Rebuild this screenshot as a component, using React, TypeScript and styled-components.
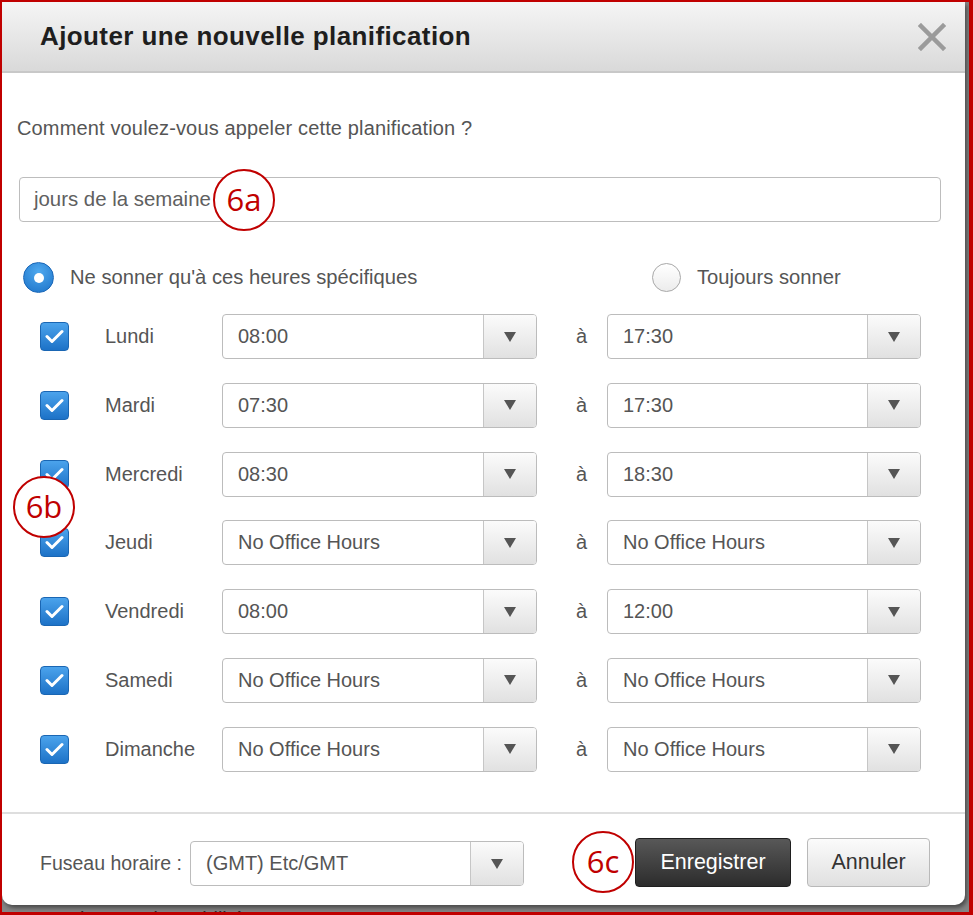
import React from 'react'
import styled, { createGlobalStyle } from 'styled-components'

const GlobalStyle = createGlobalStyle`
    html, body {
        margin: 0;
        padding: 0;
        background: #8a8a8a;
    }
    body {
        font-family: "Liberation Sans", Arial, sans-serif;
    }
`

interface DayRow {
    day: string
    from: string
    to: string
}

const days: DayRow[] = [
    { day: 'Lundi', from: '08:00', to: '17:30' },
    { day: 'Mardi', from: '07:30', to: '17:30' },
    { day: 'Mercredi', from: '08:30', to: '18:30' },
    { day: 'Jeudi', from: 'No Office Hours', to: 'No Office Hours' },
    { day: 'Vendredi', from: '08:00', to: '12:00' },
    { day: 'Samedi', from: 'No Office Hours', to: 'No Office Hours' },
    { day: 'Dimanche', from: 'No Office Hours', to: 'No Office Hours' },
]

const Select: React.FC<{ value: string; width: number }> = ({ value, width }) => (
    <SelectBox $width={width}>
        <SelectValue>{value}</SelectValue>
        <SelectArrow>
            <svg width="14" height="12" viewBox="0 0 14 12">
                <path d="M1 1 L13 1 L7 11 Z" fill="#555" />
            </svg>
        </SelectArrow>
    </SelectBox>
)

const Checkbox: React.FC = () => (
    <CheckBox>
        <svg width="19" height="15" viewBox="0 0 19 15">
            <path d="M2 7.5 L7 12.5 L17 2.5" stroke="#fff" strokeWidth="3" fill="none" strokeLinecap="round" strokeLinejoin="round" />
        </svg>
    </CheckBox>
)

const App: React.FC = () => {
    return (
        <>
            <GlobalStyle />
            <Frame>
                <Dialog>
                    <Header>
                        <Title>Ajouter une nouvelle planification</Title>
                        <CloseButton>
                            <svg width="28" height="28" viewBox="0 0 28 28">
                                <path d="M3 3 L25 25 M25 3 L3 25" stroke="#9b9b9b" strokeWidth="4.5" strokeLinecap="square" />
                            </svg>
                        </CloseButton>
                    </Header>
                    <Body>
                        <Question>Comment voulez-vous appeler cette planification ?</Question>
                        <NameInput>jours de la semaine</NameInput>
                        <RadioRow>
                            <RadioOption>
                                <Radio $checked />
                                <RadioLabel>Ne sonner qu'à ces heures spécifiques</RadioLabel>
                            </RadioOption>
                            <RadioOption>
                                <Radio />
                                <RadioLabel>Toujours sonner</RadioLabel>
                            </RadioOption>
                        </RadioRow>
                        <Rows>
                            {days.map((d) => (
                                <Row key={d.day}>
                                    <Checkbox />
                                    <DayLabel>{d.day}</DayLabel>
                                    <Select value={d.from} width={315} />
                                    <ToLabel>à</ToLabel>
                                    <Select value={d.to} width={314} />
                                </Row>
                            ))}
                        </Rows>
                    </Body>
                    <Footer>
                        <FooterLeft>
                            <TzLabel>Fuseau horaire :</TzLabel>
                            <Select value="(GMT) Etc/GMT" width={334} />
                        </FooterLeft>
                        <FooterButtons>
                            <Button $primary $width={156}>Enregistrer</Button>
                            <Button $width={123}>Annuler</Button>
                        </FooterButtons>
                    </Footer>
                </Dialog>
                <BehindText>bouton de mobilité</BehindText>
                <Marker $x={213} $y={169}>6a</Marker>
                <Marker $x={13} $y={476}>6b</Marker>
                <Marker $x={572} $y={831}>6c</Marker>
            </Frame>
        </>
    )
}

const Frame = styled.div`
    position: relative;
    width: 973px;
    height: 915px;
    box-sizing: border-box;
    border-style: solid;
    border-color: #c00000;
    border-width: 2px 4px 3px 2px;
    background: #858585;
    overflow: hidden;
    display: flex;
    flex-direction: column;
`
const Dialog = styled.div`
    width: 963px;
    height: 903px;
    flex-shrink: 0;
    background: #fff;
    border-radius: 0 0 10px 10px;
    box-shadow: 2px 3px 4px rgba(0, 0, 0, 0.45);
    display: flex;
    flex-direction: column;
    position: relative;
    z-index: 1;
`
const Header = styled.div`
    height: 69px;
    flex-shrink: 0;
    background: linear-gradient(to bottom, #f5f5f5, #d9d9d9);
    border-bottom: 2px solid #c8c8c8;
    display: flex;
    align-items: center;
    justify-content: space-between;
    padding: 0 19px 0 38px;
`
const Title = styled.h1`
    margin: 0;
    font-size: 26px;
    font-weight: bold;
    color: #1e1e1e;
    letter-spacing: 0.4px;
`
const CloseButton = styled.div`
    width: 28px;
    height: 28px;
    display: flex;
`
const Body = styled.div`
    flex: 1;
    padding: 0 24px 0 15px;
    display: flex;
    flex-direction: column;
`
const Question = styled.div`
    margin-top: 43px;
    font-size: 20px;
    line-height: 24px;
    color: #555;
    letter-spacing: 0.15px;
`
const NameInput = styled.div`
    margin-top: 37px;
    margin-left: 2px;
    width: 922px;
    height: 45px;
    box-sizing: border-box;
    border: 1px solid #bdbdbd;
    border-radius: 4px;
    padding-left: 14px;
    display: flex;
    align-items: center;
    font-size: 20.4px;
    color: #606060;
`
const RadioRow = styled.div`
    margin-top: 40px;
    display: grid;
    grid-template-columns: 635px 1fr;
    height: 31px;
    align-items: center;
`
const RadioOption = styled.div`
    display: flex;
    align-items: center;
    gap: 16px;
`
const Radio = styled.div<{ $checked?: boolean }>`
    box-sizing: border-box;
    width: ${(p) => (p.$checked ? '31px' : '29px')};
    height: ${(p) => (p.$checked ? '31px' : '29px')};
    margin-left: ${(p) => (p.$checked ? '6px' : '0')};
    border-radius: 50%;
    position: relative;
    background: ${(p) =>
        p.$checked
            ? 'radial-gradient(circle at 50% 30%, #4fa9ef, #1b72c8)'
            : 'linear-gradient(to bottom, #fff, #ececec)'};
    border: 1px solid ${(p) => (p.$checked ? '#1a67b8' : '#a8a8a8')};
    &::after {
        content: '';
        display: ${(p) => (p.$checked ? 'block' : 'none')};
        position: absolute;
        width: 10px;
        height: 10px;
        border-radius: 50%;
        background: #fff;
        top: 50%;
        left: 50%;
        transform: translate(-50%, -50%);
    }
`
const RadioLabel = styled.span`
    font-size: 20.2px;
    color: #555;
`
const Rows = styled.div`
    margin-top: 21px;
    display: flex;
    flex-direction: column;
    gap: 23.8px;
`
const Row = styled.div`
    display: grid;
    grid-template-columns: 65px 117px 315px 70px 314px;
    align-items: center;
    height: 45px;
    padding-left: 23px;
`
const CheckBox = styled.div`
    width: 29px;
    height: 29px;
    box-sizing: border-box;
    border-radius: 4px;
    border: 1px solid #1a66b3;
    background: linear-gradient(to bottom, #4ba3ec, #1d72c7);
    display: flex;
    align-items: center;
    justify-content: center;
`
const DayLabel = styled.span`
    font-size: 20px;
    color: #555;
`
const ToLabel = styled.span`
    font-size: 20px;
    color: #555;
    padding-left: 39px;
`
const SelectBox = styled.div<{ $width: number }>`
    width: ${(p) => p.$width}px;
    height: 45px;
    box-sizing: border-box;
    border: 1px solid #bcbcbc;
    border-radius: 4px;
    display: flex;
    overflow: hidden;
    background: #fff;
`
const SelectValue = styled.div`
    flex: 1;
    display: flex;
    align-items: center;
    padding-left: 15px;
    font-size: 20px;
    color: #555;
`
const SelectArrow = styled.div`
    width: 52px;
    border-left: 1px solid #c6c6c6;
    background: linear-gradient(to bottom, #fbfbfb, #e1e1e1);
    display: flex;
    align-items: center;
    justify-content: center;
`
const Footer = styled.div`
    height: 93px;
    flex-shrink: 0;
    border-top: 2px solid #dedede;
    display: flex;
    align-items: center;
    justify-content: space-between;
    padding: 8px 35px 0 38px;
    box-sizing: border-box;
`
const FooterLeft = styled.div`
    display: flex;
    align-items: center;
    gap: 8px;
`
const TzLabel = styled.span`
    font-size: 19.5px;
    color: #555;
`
const FooterButtons = styled.div`
    display: flex;
    gap: 16px;
    margin-top: -3px;
`
const Button = styled.div<{ $primary?: boolean; $width: number }>`
    width: ${(p) => p.$width}px;
    height: 49px;
    box-sizing: border-box;
    display: flex;
    align-items: center;
    justify-content: center;
    border-radius: 4px;
    font-size: 21.5px;
    color: ${(p) => (p.$primary ? '#fff' : '#333')};
    border: 1px solid ${(p) => (p.$primary ? '#1f1f1f' : '#b9b9b9')};
    background: ${(p) =>
        p.$primary
            ? 'linear-gradient(to bottom, #585858, #2c2c2c)'
            : 'linear-gradient(to bottom, #fbfbfb, #e0e0e0)'};
`
const BehindText = styled.div`
    margin: 3px 0 0 78px;
    font-size: 20px;
    line-height: 22px;
    color: #2d2d2d;
`
const Marker = styled.div<{ $x: number; $y: number }>`
    position: absolute;
    left: ${(p) => p.$x - 2}px;
    top: ${(p) => p.$y - 2}px;
    width: 62px;
    height: 62px;
    box-sizing: border-box;
    border: 2.5px solid #c00000;
    border-radius: 50%;
    background: #fff;
    z-index: 2;
    display: flex;
    align-items: center;
    justify-content: center;
    font-family: "Open Sans", "Liberation Sans", sans-serif;
    font-size: 31px;
    color: #c00000;
    padding-bottom: 2px;
`

export default App
